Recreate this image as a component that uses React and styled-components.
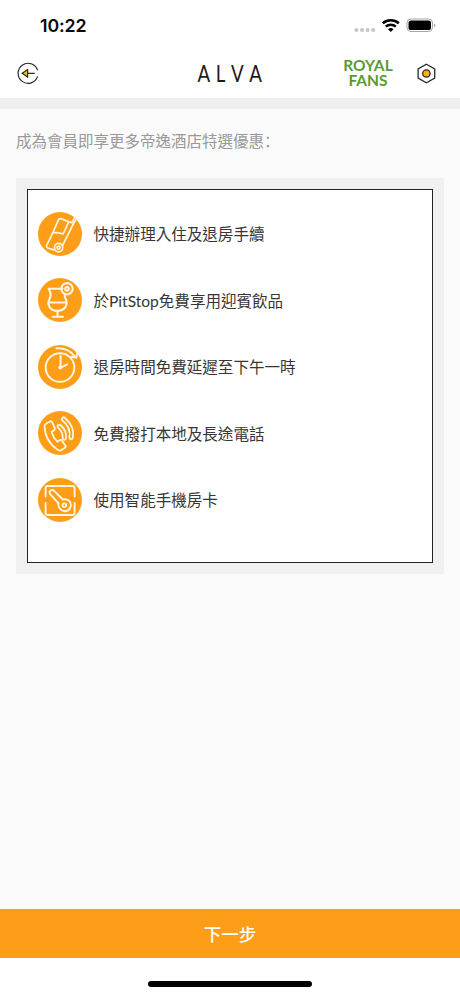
import styled, { createGlobalStyle } from "styled-components";

const GlobalStyle = createGlobalStyle`
  * {
    box-sizing: border-box;
  }
  body {
    margin: 0;
    background: #fff;
    font-family: Lato, "Noto Sans CJK TC", sans-serif;
  }
`;

const Screen = styled.div`
  display: flex;
  flex-direction: column;
  width: 460px;
  height: 996px;
  overflow: hidden;
  background: #fff;
`;

const StatusBar = styled.div`
  display: flex;
  align-items: center;
  justify-content: space-between;
  height: 50px;
  padding: 0 24px 0 40px;
`;

const Clock = styled.span`
  padding-top: 1px;
  font: 600 17.8px/24px Inter, sans-serif;
  letter-spacing: -0.1px;
  color: #0a0a0a;
`;

const StatusIcons = styled.svg`
  display: block;
  width: 84px;
  height: 20px;
`;

const Header = styled.header`
  display: grid;
  grid-template-columns: 180px 100px 46px 84px 50px;
  align-items: center;
  height: 48px;
  padding-bottom: 2px;
`;

const HeaderButton = styled.button`
  display: flex;
  align-items: center;
  height: 30px;
  padding: 0 0 0 ${(props) => props.$left || 0}px;
  margin: 0;
  border: 0;
  background: none;
  svg {
    display: block;
  }
`;

const Brand = styled.h1`
  margin: 0;
  padding: 0 0 1px 17.5px;
  font: 400 22.8px/28px Lato, sans-serif;
  font-kerning: none;
  letter-spacing: 6.8px;
  color: #1c1c1c;
  white-space: nowrap;
  transform: scaleX(0.82);
  transform-origin: 17.5px 50%;
`;

const Fans = styled.div`
  grid-column: 4;
  display: flex;
  flex-direction: column;
  font: 700 15.5px/16px Lato, sans-serif;
  text-align: center;
  color: #5a9a32;
`;

const FansLine = styled.span`
  display: block;
  height: 15.5px;
  line-height: 15.5px;
`;

const Main = styled.main`
  flex: 1;
  padding: 20px 16px 0;
  border-top: 11px solid #eee;
  background: #fafafa;
`;

const Intro = styled.p`
  height: 24px;
  margin: 0 0 25px;
  font-size: 15.5px;
  line-height: 24px;
  color: #999;
`;

const Colon = styled.span`
  font-family: "Noto Sans CJK SC", sans-serif;
  line-height: 1;
`;

const Panel = styled.section`
  height: 396px;
  padding: 11px;
  background: #f0f0f0;
`;

const List = styled.ul`
  display: flex;
  flex-direction: column;
  gap: 22.6px;
  height: 374px;
  margin: 0;
  padding: 21.5px 10px 0;
  border: 1px solid #222;
  background: #fff;
  list-style: none;
`;

const Item = styled.li`
  display: flex;
  align-items: center;
  gap: 11.5px;
  height: 44px;
  font-size: 15.55px;
  color: #363636;
`;

const Label = styled.span`
  padding-bottom: 1px;
`;

const Badge = styled.svg`
  flex: none;
  width: 44px;
  height: 44px;
  border-radius: 50%;
  background: #fd9d18;
  fill: none;
  stroke: #fff5e0;
  stroke-width: ${(props) => props.$weight || 1.9};
  stroke-linecap: round;
  stroke-linejoin: round;
`;

const NextButton = styled.button`
  height: 49px;
  padding: 0;
  border: 0;
  background: #fd9d18;
  color: #fff;
  font: 500 17.5px/49px "Noto Sans CJK TC", sans-serif;
`;

const HomeArea = styled.footer`
  display: flex;
  justify-content: center;
  height: 38px;
  padding-top: 23px;
`;

const HomeBar = styled.div`
  width: 164px;
  height: 6px;
  border-radius: 3px;
  background: #000;
`;

const Luggage = () => (
  <Badge viewBox="0 0 44 44" $weight={1.7}>
    <path d="M14.8 20.8 20.2 8.3c.8-1.6 1.9-2 3.5-1.4l7.1 2.8-5.6 12.1c-3.6-.8-8.4-1.2-10.4-1z" />
    <path d="M14.8 20.8 8.8 33.2c-.7 1.6-.3 2.3 1.1 2.8l5.8 1.9M30.8 9.7l3.2.9 3-5.5M24.8 32.8 36 10.6l3.6-5.4" />
    <circle cx="20.6" cy="35.6" r="4.2" />
    <circle cx="20.6" cy="35.6" r="1.5" />
  </Badge>
);

const Drink = () => (
  <Badge viewBox="0 0 44 44" $weight={2.1}>
    <path d="M24.5 10.8H10.6c3 4.8 2.2 7.3.8 10.4-3 6.6 1.8 11.7 8 11.7s11.2-5.1 8.4-11.7c-.7-1.4-1.2-2.5-1.1-4.2" />
    <path d="M10.6 24.5h17.8M19.5 33v5M14.5 38.8h10.5" />
    <circle cx="29" cy="10.8" r="5.7" />
    <circle cx="29" cy="10.8" r="1.8" />
  </Badge>
);

const LateCheckout = () => (
  <Badge viewBox="0 0 44 44" $weight={2}>
    <circle cx="22" cy="22.5" r="14.3" />
    <path d="M22.6 11v11.8l6.5-3.5M18.5 3.3c8.1-.7 14 2.4 18.2 8M33.4 11.7l5 1.1 1-5.2" />
    <circle cx="22.3" cy="22.6" r="1" />
  </Badge>
);

const Phone = () => (
  <Badge viewBox="0 0 44 44" $weight={1.8}>
    <path d="m8 12.7 3.4-2c1.6-.9 2.4-.4 3 1l2.2 5c.6 1.4.2 2.2-1 2.9l-2 1.1c1 4 3 7.3 5.7 10l2-1.3c1.2-.7 2-.5 2.9.6l3 4.3c.8 1.2.5 2-.6 2.7L23.5 39c-1.2.8-2.3.7-3.4 0C11.6 33.3 6.8 24.8 6.6 15.4c0-1.2.3-2 1.4-2.7z" />
    <path d="M20 16.6c-1.2-2.2 1.2-3.8 3-2.1 4 3.6 5.6 7.6 5 12.7-.3 2.5-3.4 2-3.3-.2.2-4-1.3-7.6-4.7-10.4z" />
    <path d="M24.2 9.2c-1.2-2 .9-3.9 2.8-2.2 6.5 5.6 9.2 12.3 7.8 19.7-.5 2.5-3.7 1.8-3.3-.5 1-6.4-1.7-12.5-7.3-17z" />
  </Badge>
);

const RoomKey = () => (
  <Badge viewBox="0 0 44 44" $weight={1.9}>
    <path d="M7.6 18.5V10q0-2 2-2h25q2 0 2 2v8.5M7.6 25v10q0 2 2 2h25q2 0 2-2V25" />
    <path d="M12.2 16.2c-2-3.2 1.6-5.4 3.9-3.4l8.7 8.7c4.9-1.1 8.7 2.1 8 6.4-.8 5.6-7.6 7.2-11 2.6-1.4-1.7-1.7-3.1-1.3-5.1z" />
    <circle cx="26.3" cy="27.2" r="1.8" />
  </Badge>
);

const benefits = [
  { icon: Luggage, label: "快捷辦理入住及退房手續" },
  { icon: Drink, label: "於PitStop免費享用迎賓飲品" },
  { icon: LateCheckout, label: "退房時間免費延遲至下午一時" },
  { icon: Phone, label: "免費撥打本地及長途電話" },
  { icon: RoomKey, label: "使用智能手機房卡" },
];

export default function App() {
  return (
    <Screen>
      <GlobalStyle />
      <StatusBar>
        <Clock>10:22</Clock>
        <StatusIcons viewBox="0 0 84 20">
          <g fill="#c6c6c6">
            <circle cx="4.4" cy="15" r="2" />
            <circle cx="10" cy="15" r="2" />
            <circle cx="15.6" cy="15" r="2" />
            <circle cx="21.2" cy="15" r="2" />
          </g>
          <g fill="none" stroke="#000" strokeWidth="2.5">
            <path d="M30.8 8.2a12.2 12.2 0 0 1 16 0" />
            <path d="M33.7 11.6a7.8 7.8 0 0 1 10.2 0" />
          </g>
          <path d="M38.8 17.1 36 14.2a4.4 4.4 0 0 1 5.6 0z" />
          <rect x="55" y="4" width="25.5" height="12.5" rx="4" fill="none" stroke="#a5a5a5" />
          <rect x="56.5" y="5.5" width="22.5" height="9.5" rx="2.6" />
          <path d="M82 8.4c1.8.8 1.8 3 0 3.8z" fill="#a5a5a5" />
        </StatusIcons>
      </StatusBar>
      <Header>
        <HeaderButton $left={17} aria-label="返回">
          <svg width="23" height="23" viewBox="0 0 23 23" fill="none" stroke="#292929" strokeWidth="1.2">
            <path d="M20.6 8.2a10 10 0 1 0 0 6.2M10.5 11.3h7.2" />
            <path d="M5.2 11.3 10.6 7.6v7.4z" fill="#f5bd22" />
          </svg>
        </HeaderButton>
        <Brand>ALVA</Brand>
        <Fans>
          <FansLine>ROYAL</FansLine>
          <FansLine>FANS</FansLine>
        </Fans>
        <HeaderButton $left={6} aria-label="設定">
          <svg width="21" height="21" viewBox="0 0 21 21" stroke="#292933" strokeWidth="1.3">
            <path d="m10.4 1.2 8.3 4.7v9.2l-8.3 4.7-8.3-4.7V5.9z" fill="none" />
            <circle cx="10.4" cy="10.5" r="3.7" fill="#f5b50f" />
          </svg>
        </HeaderButton>
      </Header>
      <Main>
        <Intro>
          成為會員即享更多帝逸酒店特選優惠<Colon lang="zh-CN">：</Colon>
        </Intro>
        <Panel>
          <List>
            {benefits.map(({ icon: Icon, label }) => (
              <Item key={label}>
                <Icon />
                <Label>{label}</Label>
              </Item>
            ))}
          </List>
        </Panel>
      </Main>
      <NextButton>下一步</NextButton>
      <HomeArea>
        <HomeBar />
      </HomeArea>
    </Screen>
  );
}
